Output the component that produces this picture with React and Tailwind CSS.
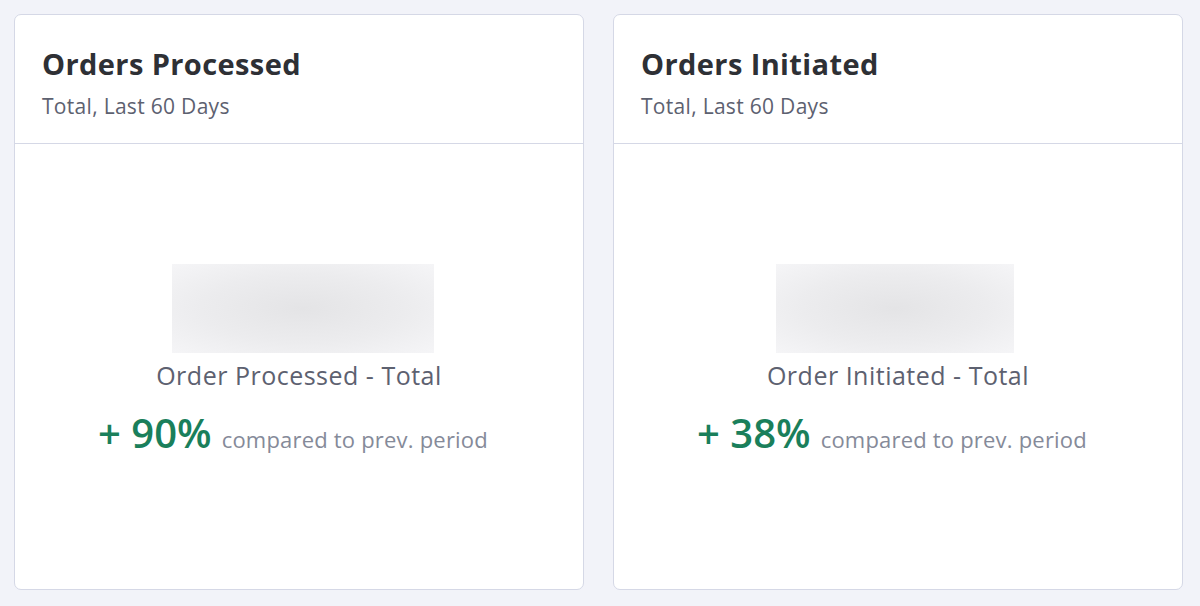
export default function App() {
  const cards = [
    { title: "Orders Processed", label: "Order Processed - Total", pct: "90%", blurW: "w-[262px]", blurOff: "ml-[8px]" },
    { title: "Orders Initiated", label: "Order Initiated - Total", pct: "38%", blurW: "w-[238px]", blurOff: "-ml-[6px]" },
  ];

  return (
    <div className="w-[1200px] h-[606px] bg-[#f2f3f9] pl-[14px] pr-[17px] pt-[14px] pb-[16px] flex gap-[29px] font-['Open_Sans',sans-serif]">
      {cards.map((c) => (
        <div key={c.title} className="flex-1 bg-white border border-[#d5d8e6] rounded-[7px] flex flex-col">
          {/* header */}
          <div className="h-[129px] border-b border-[#d5d8e6] px-[27px] pt-[30px]">
            <h2 className="text-[29px] leading-[38px] font-bold text-[#2e3035] tracking-[0.4px]">{c.title}</h2>
            <p className="mt-[10px] text-[21px] leading-[26px] text-[#5d6170] tracking-[0.3px]">Total, Last 60 Days</p>
          </div>

          {/* body */}
          <div className="flex-1 flex flex-col items-center pt-[120px]">
            <div className={`${c.blurW} ${c.blurOff} h-[89px] bg-[radial-gradient(ellipse_at_center,#e4e4e6_0%,#ececee_55%,#f5f5f7_100%)]`} />
            <div className="mt-[4px] text-[25px] leading-[36px] text-[#5d6170] tracking-[0.5px]">{c.label}</div>
            <div className="mt-[18px] -ml-[12px] flex items-baseline gap-[10px]">
              <span className="text-[40px] leading-[44px] font-semibold text-[#1a7f5b]">+ {c.pct}</span>
              <span className="text-[22px] text-[#858a99] tracking-[0.2px]">compared to prev. period</span>
            </div>
          </div>
        </div>
      ))}
    </div>
  );
}
